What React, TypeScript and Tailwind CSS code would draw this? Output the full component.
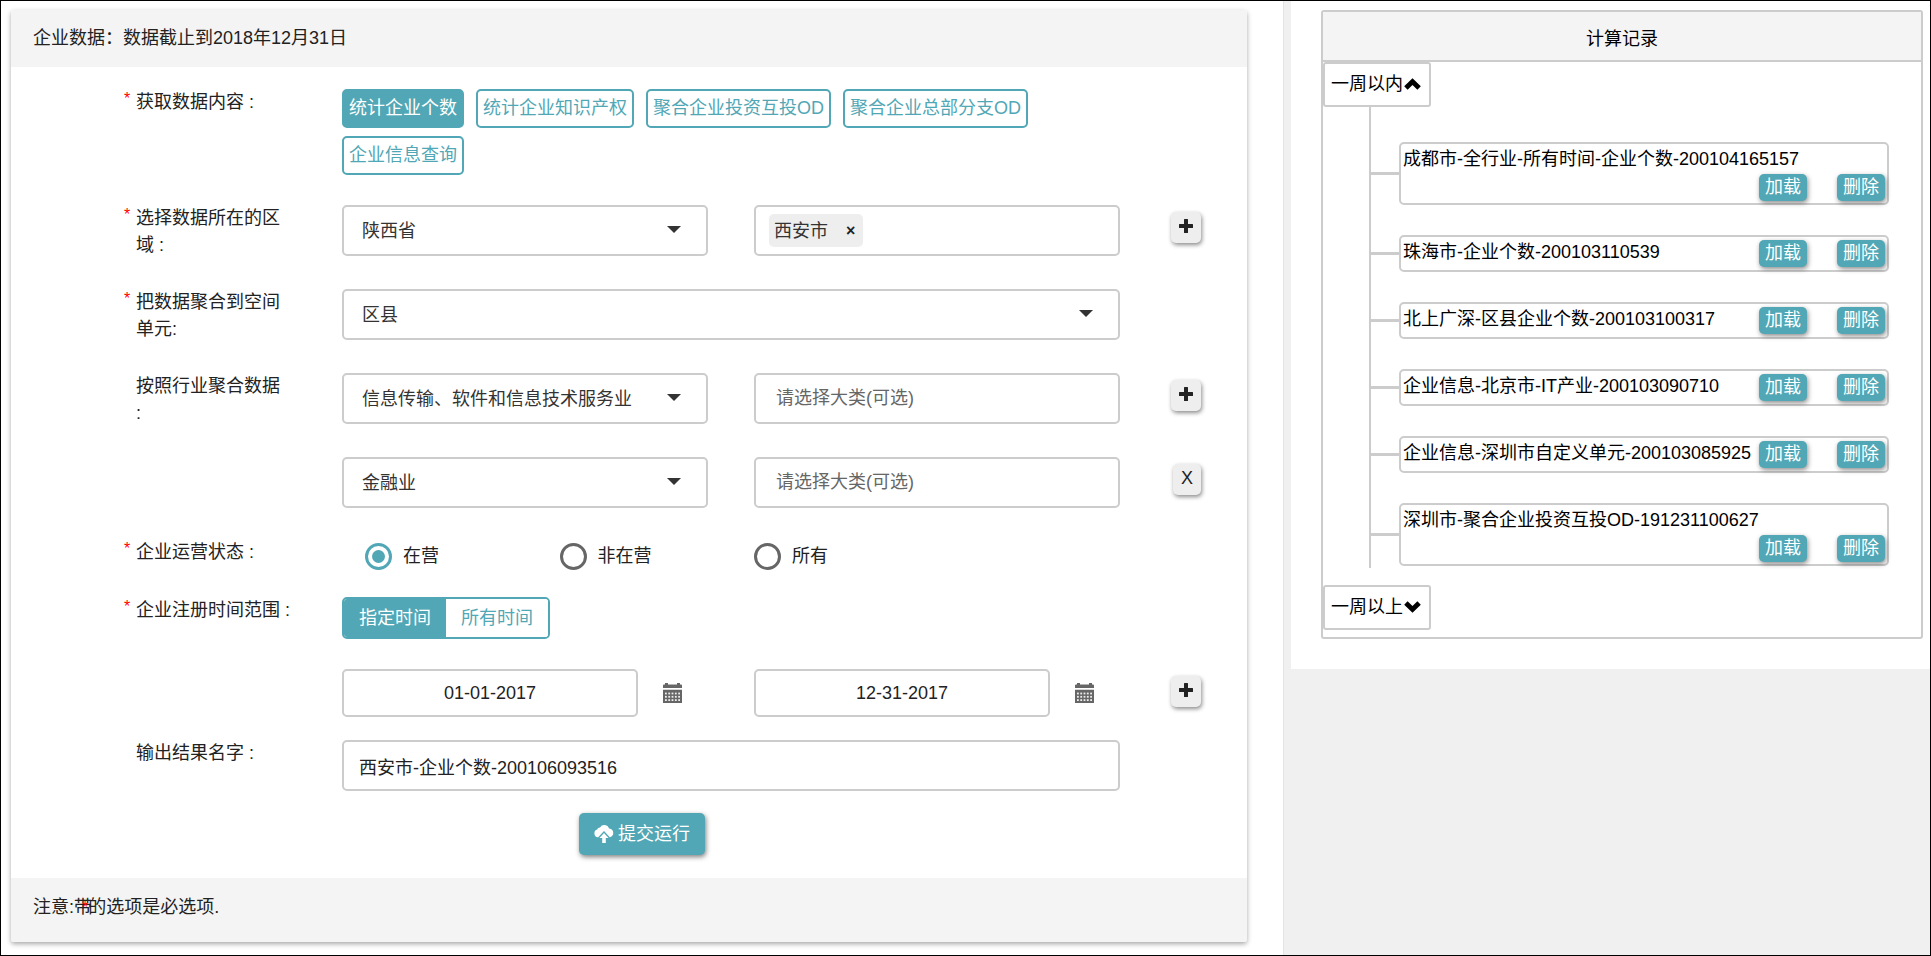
import { useState } from "react";
import type { ReactNode } from "react";

const CAPTION = "text-lg leading-[27px]";
const FIELD = "h-[51px] w-full rounded-[5px] border-2 border-[#ccc] bg-white text-lg";

type RowProps = {
  label?: string;
  htmlFor?: string;
  required?: boolean;
  className?: string;
  action?: ReactNode;
  children: ReactNode;
};

function Row({ label, htmlFor, required, className = "", action, children }: RowProps) {
  return (
    <div className={`flex items-start ${className}`}>
      <div className="flex w-[331px] shrink-0 justify-end">
        {label && (
          <>
            <div className="w-3 shrink-0 text-base leading-5 text-[#f00]">{required && "*"}</div>
            <label htmlFor={htmlFor} className={`mr-[50px] w-[156px] shrink-0 whitespace-pre-line ${CAPTION}`}>
              {label}
            </label>
          </>
        )}
      </div>
      <div className="min-w-0 flex-1">{children}</div>
      <div className="flex w-[127px] shrink-0 justify-end pt-[7px] pr-[46px]">{action}</div>
    </div>
  );
}

type SelectProps = { id?: string; options: string[]; label: string };

function Select({ id, options, label }: SelectProps) {
  return (
    <div className="relative">
      <select
        id={id}
        aria-label={label}
        className={`${FIELD} appearance-none pr-12 pl-[18px] text-[#333]`}
      >
        {options.map((o) => (
          <option key={o}>{o}</option>
        ))}
      </select>
      <svg
        viewBox="0 0 14 7"
        className="pointer-events-none absolute top-[21px] right-[27px] h-[7px] w-3.5 fill-[#333]"
      >
        <path d="M0 0H14L7 7Z" />
      </svg>
    </div>
  );
}

function PlusButton({ label }: { label: string }) {
  return (
    <button
      type="button"
      aria-label={label}
      className="flex h-[31px] w-[30px] items-start justify-center rounded-[5px] bg-[#eee] pt-[7px] shadow-[1px_2px_4px_rgba(0,0,0,0.45)]"
    >
      <svg viewBox="0 0 14 14" className="size-3.5 fill-[#222]">
        <path d="M5.6 0H8.4Q9 0 9 .6V5H13.4Q14 5 14 5.6V8.4Q14 9 13.4 9H9V13.4Q9 14 8.4 14H5.6Q5 14 5 13.4V9H.6Q0 9 0 8.4V5.6Q0 5 .6 5H5V.6Q5 0 5.6 0Z" />
      </svg>
    </button>
  );
}

const DAY_COLUMNS = [2, 5.3, 8.6, 11.9, 15.2];
const DAY_ROWS = [9.6, 12.9, 16.2];

function CalendarIcon() {
  return (
    <svg viewBox="0 0 19 20" className="h-5 w-[19px]">
      <path className="fill-[#666]" d="M.6 1.6H2V0H5V1.6H14V0H17V1.6H18.4L19 2.2V5H0V2.2ZM0 6.8H19V20H0Z" />
      {DAY_ROWS.map((y) =>
        DAY_COLUMNS.map((x) => (
          <rect key={`${x}-${y}`} className="fill-[#eee]" x={x} y={y} width="1.8" height="1.8" />
        )),
      )}
    </svg>
  );
}

function DateField({ label, value, id }: { label: string; value: string; id?: string }) {
  return (
    <div className="flex items-center">
      <input
        id={id}
        aria-label={label}
        defaultValue={value}
        className="h-12 min-w-0 flex-1 rounded-[5px] border-2 border-[#ccc] bg-white text-center text-lg text-[#222]"
      />
      <button type="button" aria-label={`${label}日历`} className="ml-[25px] w-[45px]">
        <CalendarIcon />
      </button>
    </div>
  );
}

const CONTENTS = ["统计企业个数", "统计企业知识产权", "聚合企业投资互投OD", "聚合企业总部分支OD", "企业信息查询"];
const STATES = ["在营", "非在营", "所有"];
const RANGES = ["指定时间", "所有时间"];
const RECORDS = [
  "成都市-全行业-所有时间-企业个数-200104165157",
  "珠海市-企业个数-200103110539",
  "北上广深-区县企业个数-200103100317",
  "企业信息-北京市-IT产业-200103090710",
  "企业信息-深圳市自定义单元-200103085925",
  "深圳市-聚合企业投资互投OD-191231100627",
];

function QueryForm() {
  const [content, setContent] = useState(0);
  const [state, setState] = useState(0);
  const [range, setRange] = useState(0);
  return (
    <form
      onSubmit={(e) => e.preventDefault()}
      className="flex flex-col rounded-[3px] bg-white shadow-[0_2px_5px_rgba(0,0,0,0.35)]"
    >
      <h1 className={`rounded-t-[3px] bg-[#f4f4f4] px-[22px] py-[15px] ${CAPTION}`}>
        企业数据：数据截止到2018年12月31日
      </h1>

      <div className="pt-[22px] pb-[23px]">
        <Row label="获取数据内容 :" required>
          <div className="flex flex-wrap gap-x-3 gap-y-2">
            {CONTENTS.map((c, i) => (
              <button
                key={c}
                type="button"
                onClick={() => setContent(i)}
                className={`h-[39px] rounded-[5px] border-2 border-[#51a7b5] px-[5px] pb-0.5 text-lg ${
                  i === content ? "bg-[#51a7b5] text-white" : "bg-white text-[#51a7b5]"
                }`}
              >
                {c}
              </button>
            ))}
          </div>
        </Row>

        <Row
          label="选择数据所在的区域 :"
          htmlFor="province"
          required
          className="mt-[30px]"
          action={<PlusButton label="添加区域" />}
        >
          <div className="grid grid-cols-2 gap-[46px]">
            <Select id="province" label="省份" options={["陕西省"]} />
            <div className={`flex items-center px-[13px] ${FIELD}`}>
              <span className="flex h-[33px] items-center rounded-[5px] bg-[#eee] pr-2 pl-[5px] text-[#333]">
                西安市
                <button type="button" aria-label="移除西安市" className="ml-[18px] text-base font-bold text-[#222]">
                  ×
                </button>
              </span>
            </div>
          </div>
        </Row>

        <Row label="把数据聚合到空间单元:" htmlFor="unit" required className="mt-[30px]">
          <Select id="unit" label="空间单元" options={["区县"]} />
        </Row>

        <Row
          label={"按照行业聚合数据\n:"}
          htmlFor="industry"
          className="mt-[30px]"
          action={<PlusButton label="添加行业" />}
        >
          <div className="grid grid-cols-2 gap-[46px]">
            <Select id="industry" label="行业" options={["信息传输、软件和信息技术服务业"]} />
            <input
              aria-label="行业大类"
              placeholder="请选择大类(可选)"
              className={`${FIELD} px-5 placeholder:text-[#666]`}
            />
          </div>
        </Row>

        <Row
          className="mt-[30px]"
          action={
            <button
              type="button"
              aria-label="移除行业"
              className="h-[31px] w-7 rounded-[5px] bg-[#eee] pb-1 text-lg leading-none text-[#222] shadow-[1px_2px_4px_rgba(0,0,0,0.45)]"
            >
              X
            </button>
          }
        >
          <div className="grid grid-cols-2 gap-[46px]">
            <Select label="行业二" options={["金融业"]} />
            <input
              aria-label="行业二大类"
              placeholder="请选择大类(可选)"
              className={`${FIELD} px-5 placeholder:text-[#666]`}
            />
          </div>
        </Row>

        <Row label="企业运营状态 :" required className="mt-[31px]">
          <div role="radiogroup" aria-label="企业运营状态" className="grid grid-cols-4 pt-1">
            {STATES.map((s, i) => (
              <label key={s} className="flex items-center gap-[11px] pl-[23px] text-lg leading-[27px]">
                <input
                  type="radio"
                  name="state"
                  checked={i === state}
                  onChange={() => setState(i)}
                  className="size-[27px] shrink-0 appearance-none rounded-full border-3 border-[#666] bg-clip-content p-1 checked:border-[#51a7b5] checked:bg-[#51a7b5]"
                />
                {s}
              </label>
            ))}
          </div>
        </Row>

        <Row label="企业注册时间范围 :" required className="mt-[27px]">
          <div className="flex h-[42px] w-fit overflow-hidden rounded-[5px] border-2 border-[#51a7b5]">
            {RANGES.map((r, i) => (
              <button
                key={r}
                type="button"
                onClick={() => setRange(i)}
                className={`px-[15px] text-lg ${i === range ? "bg-[#51a7b5] text-white" : "bg-white text-[#51a7b5]"}`}
              >
                {r}
              </button>
            ))}
          </div>
        </Row>

        <Row className="mt-[30px]" action={<PlusButton label="添加时间" />}>
          <div className="grid grid-cols-2 gap-[46px]">
            <DateField label="开始时间" value="01-01-2017" />
            <DateField label="结束时间" value="12-31-2017" />
          </div>
        </Row>

        <Row label="输出结果名字 :" htmlFor="result" className="mt-[23px]">
          <input id="result" defaultValue="西安市-企业个数-200106093516" className={`${FIELD} px-[15px] text-[#222]`} />
        </Row>

        <div className="mt-[22px] flex justify-center pl-[26px]">
          <button
            type="submit"
            className="flex h-[42px] items-center gap-1 rounded-[5px] bg-[#51a7b5] px-[15px] text-lg text-white shadow-[1px_2px_5px_rgba(0,0,0,0.5)]"
          >
            <svg viewBox="0 0 20 18" className="h-[18px] w-5 fill-white">
              <path d="M4.2 12.2H3.8A3.9 3.9 0 0 1 3.2 4.6A3 3 0 0 1 6 2.4A5.2 5.2 0 0 1 15.2 3.4A4.5 4.5 0 0 1 16 12.2H15.8L10 6L4.2 12.2Z" />
              <path d="M10 8L14.6 13H11.8V18H8.2V13H5.4Z" />
            </svg>
            提交运行
          </button>
        </div>
      </div>

      <p className={`rounded-b-[3px] bg-[#f4f4f4] px-[22px] pt-4 pb-[21px] ${CAPTION}`}>
        注意:带<span className="relative z-10 -ml-2.5 text-base leading-none text-[#f00]">*</span>的选项是必选项.
      </p>
    </form>
  );
}

function GroupButton({ label, open }: { label: string; open: boolean }) {
  return (
    <button
      type="button"
      aria-expanded={open}
      className="flex h-[45px] items-center gap-px rounded-[3px] border-2 border-[#ccc] bg-white pr-2 pb-0.5 pl-1.5 text-lg"
    >
      {label}
      <svg viewBox="0 0 17 12" className="h-3 w-[17px] fill-black">
        {open ? (
          <path d="M8.5 .2L16.8 8.3L13.4 11.8L8.5 7L3.6 11.8L.2 8.3Z" />
        ) : (
          <path d="M8.5 11.8L16.8 3.7L13.4 .2L8.5 5L3.6 .2L.2 3.7Z" />
        )}
      </svg>
    </button>
  );
}

function SmallButton({ children }: { children: ReactNode }) {
  return (
    <button
      type="button"
      className="h-[27px] rounded-[5px] bg-[#51a7b5] px-1.5 text-lg leading-[27px] text-white shadow-[1px_2px_5px_rgba(0,0,0,0.45)]"
    >
      {children}
    </button>
  );
}

function Records() {
  return (
    <section className="rounded-[3px] border-2 border-[#ccc] pb-[7px] text-black">
      <h2 className="border-b-2 border-[#ccc] bg-[#f4f4f4] pt-3.5 pb-[7px] text-center text-lg leading-[27px]">
        计算记录
      </h2>
      <GroupButton label="一周以内" open />
      <ul className="mr-8 mb-[17px] ml-[46px] flex flex-col gap-[30px] border-l-2 border-[#ccc] pt-[35px] pb-0.5">
        {RECORDS.map((r) => (
          <li key={r} className="flex items-center">
            <span className="h-[3px] w-7 shrink-0 bg-[#ccc]" />
            <div className="flex min-h-[37px] flex-1 flex-wrap items-start gap-x-1 gap-y-[3px] rounded-[5px] border-2 border-[#ccc] px-0.5 pt-[3px] pb-0.5">
              <span className="text-lg leading-6">{r}</span>
              <span className="ml-auto flex gap-[30px]">
                <SmallButton>加载</SmallButton>
                <SmallButton>删除</SmallButton>
              </span>
            </div>
          </li>
        ))}
      </ul>
      <GroupButton label="一周以上" open={false} />
    </section>
  );
}

export default function App() {
  return (
    <div className="grid min-h-screen grid-cols-[1282fr_647fr] border border-black bg-[#f0f0f0] font-['Liberation_Sans','Noto_Sans_CJK_SC',sans-serif] text-[#222]">
      <main className="min-w-0 bg-white pt-[9px] pr-9 pb-3 pl-2.5">
        <QueryForm />
      </main>
      <aside className="min-w-0 border-l border-[#e4e4e4] pl-[7px]">
        <div className="bg-white pt-[9px] pr-[7px] pb-[30px] pl-[30px]">
          <Records />
        </div>
      </aside>
    </div>
  );
}
